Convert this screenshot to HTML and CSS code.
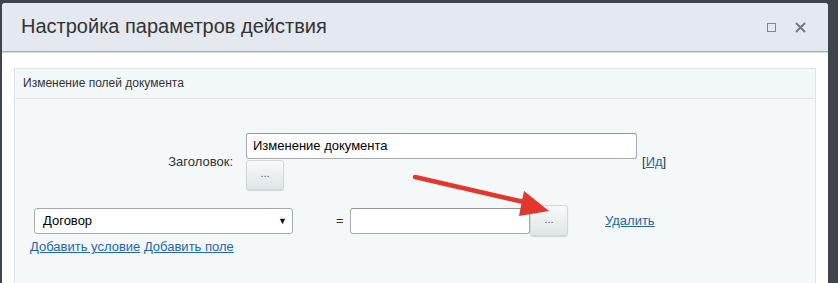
FILE: index.html
```html
<!DOCTYPE html>
<html lang="ru">
<head>
<meta charset="utf-8">
<title>Настройка параметров действия</title>
<link rel="stylesheet" href="styles.css">
</head>
<body>
<div class="dialog">
  <div class="dlg-head">
    <div class="dlg-title">Настройка параметров действия</div>
    <div class="dlg-icons">
      <span class="ico-max"></span>
      <svg class="ico-close" width="11" height="11" viewBox="0 0 11 11"><path d="M1 1L10 10M10 1L1 10" stroke="#6f7a86" stroke-width="2"/></svg>
    </div>
  </div>
  <div class="dlg-body">
    <div class="panel">
      <div class="panel-head">Изменение полей документа</div>
      <div class="panel-content">
        <div class="row1">
          <div class="label">Заголовок:</div>
          <div class="field-col">
            <div class="input wide">Изменение документа</div>
            <div class="btn">...</div>
          </div>
          <div class="id-link">[<a href="#">Ид</a>]</div>
        </div>
        <div class="row2">
          <div class="select"><span>Договор</span><span class="caret">▼</span></div>
          <div class="eq">=</div>
          <div class="input short"></div>
          <div class="btn btn2">...</div>
          <a class="del" href="#">Удалить</a>
        </div>
        <div class="links"><a href="#">Добавить условие</a> <a href="#">Добавить поле</a></div>
      </div>
    </div>
  </div>
</div>
<svg class="arrow" width="838" height="283" viewBox="0 0 838 283">
  <path d="M415 177 L528 203" stroke="#e3372b" stroke-width="4.5" stroke-linecap="round"/>
  <polygon points="549,211 519,216 524,191" fill="#e3372b"/>
</svg>
</body>
</html>
```
FILE: styles.css
```css
html, body {
  margin: 0;
  padding: 0;
}
body {
  background: #3e454c;
  font-family: "Liberation Sans", Arial, sans-serif;
  color: #333;
  height: 283px;
  overflow: hidden;
  position: relative;
}
.dialog {
  margin: 3px 0 0 2px;
  width: 826px;
  height: 280px;
  background: #fff;
  border-radius: 3px 3px 0 0;
  overflow: hidden;
}
.dlg-head {
  height: 48px;
  background: #e3e9ee;
  border-bottom: 1px solid #a9afb5;
  box-shadow: 0 1px 0 #d6dade;
  display: flex;
  align-items: center;
  border-radius: 3px 3px 0 0;
}
.dlg-title {
  flex: 1;
  padding-left: 19px;
  font-size: 20px;
  color: #333;
  padding-bottom: 1px;
}
.dlg-icons {
  display: flex;
  align-items: center;
  gap: 19px;
  padding-right: 22px;
}
.ico-max {
  width: 7px;
  height: 7px;
  border: 1.5px solid #7c8692;
}
.ico-close {
  display: block;
}
.dlg-body {
  padding: 16px 12px 0 12px;
}
.panel {
  border: 1px solid #dce6e9;
  background: #f4f8f9;
  height: 240px;
}
.panel-head {
  height: 29px;
  line-height: 29px;
  padding-left: 8px;
  font-size: 12px;
  color: #333;
  background: #f2f7f8;
  border-bottom: 1px solid #dce6e9;
}
.panel-content {
  padding-top: 34px;
}
.row1 {
  display: flex;
  align-items: center;
}
.label {
  width: 218px;
  text-align: right;
  font-size: 13px;
  margin-right: 13px;
}
.field-col {
  display: flex;
  flex-direction: column;
  align-items: flex-start;
}
.input {
  box-sizing: border-box;
  height: 26px;
  border: 1px solid #a7abb0;
  border-top-color: #8f959a;
  border-radius: 3px;
  background: #fff;
  font-size: 13px;
  line-height: 24px;
  padding-left: 6px;
  color: #000;
}
.wide { width: 391px; }
.short { width: 180px; }
.btn {
  box-sizing: border-box;
  width: 38px;
  height: 30px;
  margin-top: 1px;
  border: 1px solid #d1d6d9;
  border-radius: 3px;
  background: linear-gradient(#f8f9fa, #dfe5e7);
  box-shadow: 0 1px 1px rgba(0,0,0,0.15);
  font-size: 11px;
  color: #555;
  text-align: center;
  line-height: 24px;
}
.btn2 {
  height: 31px;
  margin-top: 0;
  margin-left: 0;
  line-height: 26px;
}
.id-link {
  font-size: 13px;
  margin-left: 5px;
  color: #333;
}
a {
  color: #2067b0;
  text-decoration: underline;
}
.row2 {
  display: flex;
  align-items: center;
  margin-top: 15px;
  padding-left: 19px;
}
.select {
  box-sizing: border-box;
  width: 259px;
  height: 26px;
  border: 1px solid #a7abb0;
  border-radius: 3px;
  background: #fff;
  display: flex;
  align-items: center;
  justify-content: space-between;
  padding: 0 5px 0 8px;
  font-size: 13px;
  color: #000;
}
.caret {
  font-size: 9px;
  color: #111;
}
.eq {
  font-size: 13px;
  margin-left: 43px;
  width: 14px;
}
.del {
  font-size: 13px;
  margin-left: 37px;
}
.links {
  font-size: 13px;
  padding-left: 15px;
  margin-top: 3px;
  line-height: 16px;
}
.arrow {
  position: absolute;
  left: 0;
  top: 0;
  pointer-events: none;
}
```
